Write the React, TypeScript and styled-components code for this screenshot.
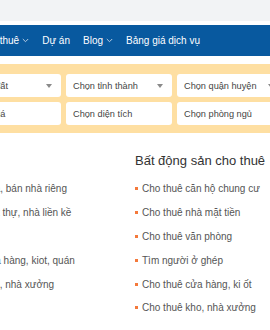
import styled, { createGlobalStyle } from 'styled-components';

const GlobalStyle = createGlobalStyle`
  body {
    margin: 0;
    background: #fff;
    font-family: 'Liberation Sans', Arial, sans-serif;
    overflow: hidden;
  }
`;

const navItems = [
  { id: 1, label: 'Nhà đất cho thuê', sub: true },
  { id: 2, label: 'Dự án', sub: false },
  { id: 3, label: 'Blog', sub: true },
  { id: 4, label: 'Bảng giá dịch vụ', sub: false },
];

const selectRow = [
  { id: 1, label: 'Chọn loại nhà đất', caret: true },
  { id: 2, label: 'Chọn tỉnh thành', caret: true },
  { id: 3, label: 'Chọn quận huyện', caret: true },
  { id: 4, label: 'Chọn khoảng giá', caret: false },
  { id: 5, label: 'Chọn diện tích', caret: false },
  { id: 6, label: 'Chọn phòng ngủ', caret: false },
];

const groups = [
  {
    id: 1,
    title: 'Bán',
    items: [
      'Bán nhà, bán nhà riêng',
      'Bán biệt thự, nhà liền kề',
      'Bán đất',
      'Bán cửa hàng, kiot, quán',
      'Bán kho, nhà xưởng',
    ],
  },
  {
    id: 2,
    title: 'Bất động sản cho thuê',
    items: [
      'Cho thuê căn hộ chung cư',
      'Cho thuê nhà mặt tiền',
      'Cho thuê văn phòng',
      'Tìm người ở ghép',
      'Cho thuê cửa hàng, ki ốt',
      'Cho thuê kho, nhà xưởng',
    ],
  },
];

const Chevron = () => (
  <svg width='7' height='5' viewBox='0 0 7 5' fill='none'>
    <path d='M0.8 1L3.5 3.7L6.2 1' stroke='#c9d8ea' strokeWidth='0.9' />
  </svg>
);

const App = () => {
  return (
    <Page>
      <GlobalStyle />
      <TopBar />
      <Nav>
        <NavInner>
          {navItems.map((el) => (
            <NavItem key={el.id}>
              {el.label}
              {el.sub && <Chevron />}
            </NavItem>
          ))}
        </NavInner>
      </Nav>
      <SearchBox>
        <SearchGrid>
          {selectRow.map((el) => (
            <Field key={el.id}>
              <span>{el.label}</span>
              {el.caret && <Caret />}
            </Field>
          ))}
        </SearchGrid>
      </SearchBox>
      <Links>
        {groups.map((g) => (
          <Group key={g.id}>
            <GroupTitle>{g.title}</GroupTitle>
            <ul>
              {g.items.map((it) => (
                <LinkItem key={it}>{it}</LinkItem>
              ))}
            </ul>
          </Group>
        ))}
      </Links>
    </Page>
  );
};

export default App;

const Page = styled.div`
  width: 270px;
  height: 330px;
  overflow: hidden;
`;

const TopBar = styled.div`
  height: 21px;
  background: #f2f3f5;
`;

const Nav = styled.nav`
  margin-top: 4px;
  height: 31px;
  background: #08599f;
  display: flex;
  align-items: center;
`;

const NavInner = styled.div`
  display: flex;
  align-items: center;
  gap: 13px;
  margin-left: -57px;
  white-space: nowrap;
`;

const NavItem = styled.div`
  display: flex;
  align-items: center;
  gap: 3px;
  color: #fff;
  font-size: 10px;
`;

const SearchBox = styled.div`
  margin-top: 8px;
  height: 69px;
  box-sizing: border-box;
  padding-top: 10px;
  background: #fedfa2;
`;

const SearchGrid = styled.div`
  display: grid;
  grid-template-columns: 132px 106px 106px;
  grid-auto-rows: 23px;
  gap: 5px;
  margin-left: -71px;
`;

const Field = styled.div`
  display: flex;
  align-items: center;
  justify-content: space-between;
  padding: 0 7px;
  background: #fff;
  border-radius: 3px;
  color: #444;
  font-size: 9.2px;
  white-space: nowrap;
`;

const Caret = styled.span`
  width: 0;
  height: 0;
  border-left: 3px solid transparent;
  border-right: 3px solid transparent;
  border-top: 4px solid #8a8a8a;
  margin-right: 2px;
`;

const Links = styled.div`
  display: grid;
  grid-template-columns: 166px 166px;
  column-gap: 13px;
  margin: 20px 0 0 -44px;

  ul {
    margin: 0;
    padding: 0;
    list-style: none;
  }
`;

const Group = styled.div`
  display: flex;
  flex-direction: column;
`;

const GroupTitle = styled.h3`
  margin: 0 0 8px;
  font-size: 13px;
  font-weight: normal;
  line-height: 16px;
  color: #333;
  white-space: nowrap;
`;

const LinkItem = styled.li`
  display: flex;
  align-items: center;
  height: 23.8px;
  font-size: 10px;
  color: #555;
  white-space: nowrap;

  &::before {
    content: '';
    width: 3px;
    height: 3px;
    margin-right: 4px;
    background: #f4793b;
  }
`;
